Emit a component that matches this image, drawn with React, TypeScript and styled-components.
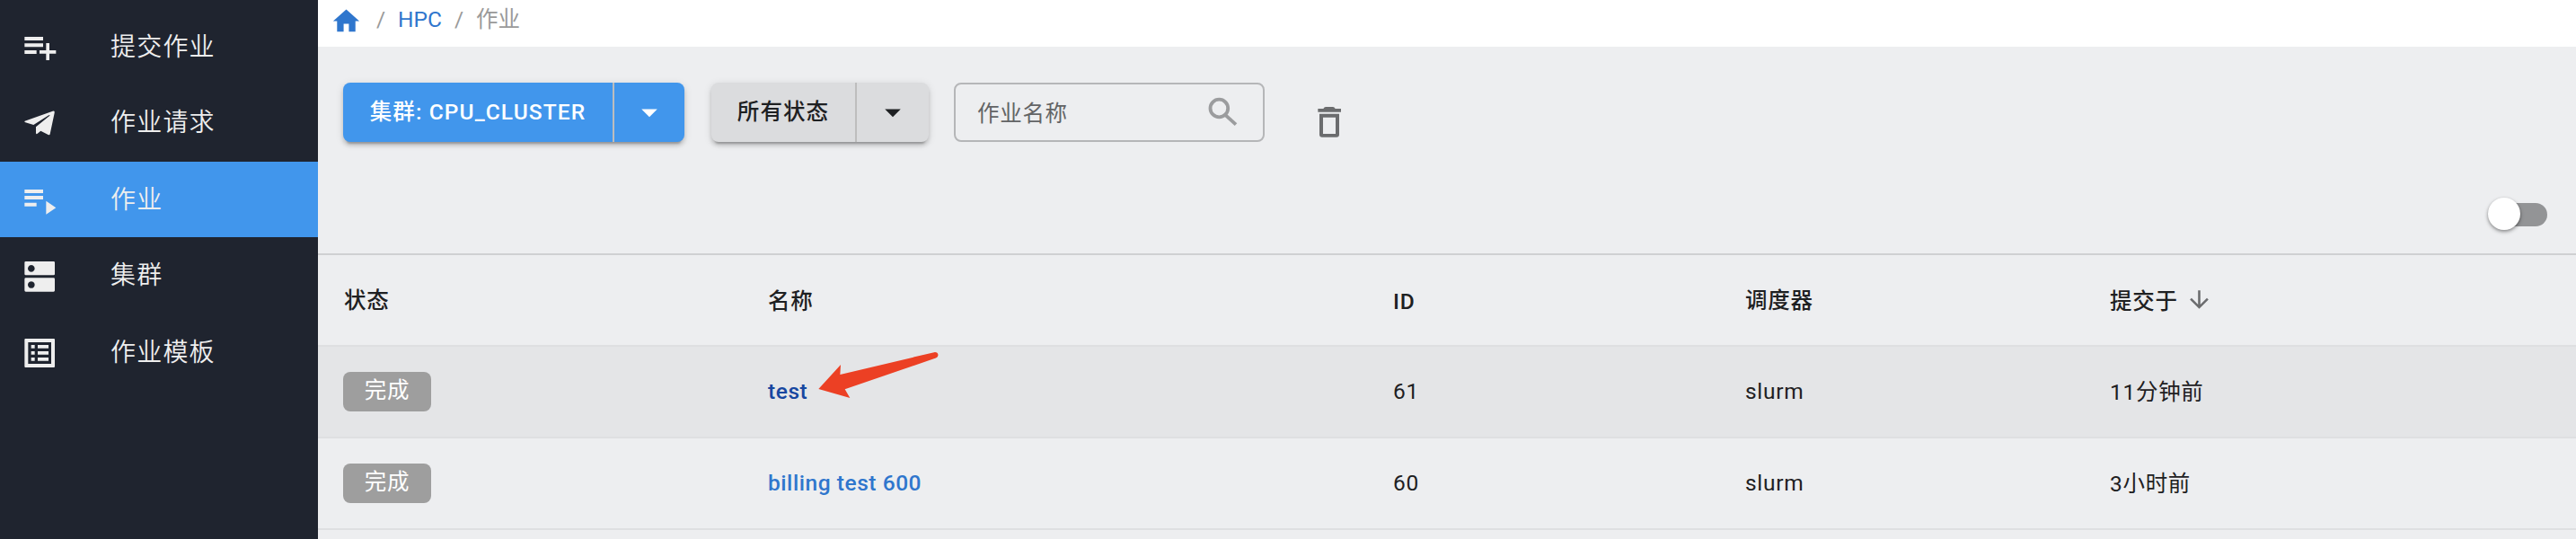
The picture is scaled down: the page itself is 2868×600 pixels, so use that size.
import React from "react";
import styled, { createGlobalStyle } from "styled-components";

const Global = createGlobalStyle`
  * { box-sizing: border-box; }
  html, body { margin: 0; padding: 0; }
  body {
    font-family: Roboto, "Noto Sans CJK SC", sans-serif;
    font-size: 24.5px;
    color: #1e2022;
    background: #edeef0;
    overflow: hidden;
  }
`;

const Page = styled.div`
  position: relative;
  display: flex;
  width: 2868px;
  height: 600px;
`;

const Sidebar = styled.nav`
  width: 354px;
  flex: none;
  padding-top: 10px;
  background: #1f242f;
  color: #eeeeee;
`;

const NavItem = styled.a<{ $active?: boolean; $gap?: number }>`
  display: flex;
  align-items: center;
  height: 84px;
  margin-bottom: ${(p) => p.$gap ?? 0}px;
  padding-left: 23px;
  background: ${(p) => (p.$active ? "#4196ec" : "transparent")};
`;

const NavLabel = styled.span`
  margin: 2px 0 0 58px;
  font-size: 28px;
  font-weight: 350;
  letter-spacing: 1.2px;
  line-height: 40px;
`;

const Icon = styled.svg<{ $size?: number; $color?: string; $left?: number }>`
  display: block;
  flex: none;
  width: ${(p) => p.$size ?? 42}px;
  height: ${(p) => p.$size ?? 42}px;
  margin-left: ${(p) => p.$left ?? 0}px;
  color: ${(p) => p.$color ?? "inherit"};
  fill: currentColor;
`;

const Main = styled.main`
  flex: 1;
  min-width: 0;
`;

const Breadcrumbs = styled.div`
  display: flex;
  align-items: flex-start;
  height: 52px;
  padding: 6px 0 0 14px;
  background: #fff;
  color: #9a9a9a;
  line-height: 34px;
`;

const Crumb = styled.span<{ $link?: boolean; $left: number }>`
  margin-left: ${(p) => p.$left}px;
  margin-top: -1px;
  color: ${(p) => (p.$link ? "#2f76cd" : "inherit")};
`;

const Toolbar = styled.div`
  display: flex;
  height: 106px;
  padding: 40px 0 0 28px;
`;

const ButtonGroup = styled.div<{ $primary?: boolean }>`
  display: flex;
  height: 66px;
  margin-right: 30px;
  border-radius: 8px;
  background: ${(p) => (p.$primary ? "#4196ec" : "#dbdcde")};
  color: ${(p) => (p.$primary ? "#fff" : "#1e2022")};
  box-shadow: 0 6px 2px -4px rgba(0, 0, 0, 0.2), 0 4px 4px 0 rgba(0, 0, 0, 0.14),
    0 2px 10px 0 rgba(0, 0, 0, 0.12);
`;

const ButtonText = styled.button<{ $width: number }>`
  width: ${(p) => p.$width}px;
  padding: 0 0 6px 0;
  border: 0;
  border-right: 2px solid #bdbdbd;
  background: none;
  color: inherit;
  font: inherit;
  font-weight: 500;
  letter-spacing: 1.1px;
  white-space: nowrap;
`;

const ButtonArrow = styled.button<{ $width: number }>`
  display: flex;
  align-items: center;
  justify-content: center;
  width: ${(p) => p.$width}px;
  padding: 0;
  border: 0;
  background: none;
  color: inherit;
`;

const SearchBox = styled.label`
  display: flex;
  align-items: center;
  justify-content: space-between;
  width: 346px;
  height: 66px;
  margin-left: -2px;
  padding: 0 24px;
  border: 2px solid #b5b6b8;
  border-radius: 8px;
  color: #636466;
  letter-spacing: 0.7px;
`;

const Placeholder = styled.span`
  margin-bottom: 2px;
`;

const IconButton = styled.button`
  width: 42px;
  height: 42px;
  margin: 23px 0 0 51px;
  padding: 0;
  border: 0;
  background: none;
`;

const Options = styled.div`
  display: flex;
  justify-content: flex-end;
  height: 124px;
  padding: 68px 32px 0 0;
`;

const SwitchTrack = styled.div`
  width: 64px;
  height: 26px;
  border-radius: 13px;
  background: #939496;
`;

const SwitchThumb = styled.div`
  width: 36px;
  height: 36px;
  margin: -6px 0 0 -2px;
  border-radius: 50%;
  background: #fff;
  box-shadow: 0 2px 4px rgba(0, 0, 0, 0.35), 0 1px 3px rgba(0, 0, 0, 0.15);
`;

const Row = styled.div<{ $hover?: boolean; $head?: boolean }>`
  display: grid;
  grid-template-columns: 473px 696px 392px 406px 1fr;
  align-items: center;
  height: ${(p) => (p.$head ? 104 : 102)}px;
  padding-left: 28px;
  border-top: ${(p) => (p.$head ? "2px solid #cfd0d2" : "0")};
  border-bottom: 2px solid #dedfe1;
  background: ${(p) => (p.$hover ? "#e4e5e7" : "transparent")};
  font-weight: ${(p) => (p.$head ? 500 : 400)};
  letter-spacing: 0.7px;
`;

const Cell = styled.div<{ $shift?: number; $indent?: number }>`
  display: flex;
  align-items: center;
  margin-bottom: ${(p) => p.$shift ?? 0}px;
  padding-left: ${(p) => p.$indent ?? 0}px;
`;

const Chip = styled.span`
  width: 98px;
  height: 44px;
  border-radius: 8px;
  background: #9e9e9e;
  color: #fff;
  line-height: 42px;
  text-align: center;
`;

const JobLink = styled.a<{ $hover?: boolean }>`
  color: ${(p) => (p.$hover ? "#1747a0" : "#2f76cd")};
  font-weight: 500;
  letter-spacing: 0.55px;
`;

const Pointer = styled.svg`
  position: absolute;
  left: 908px;
  top: 388px;
  width: 140px;
  height: 58px;
  fill: #ec4024;
`;

const icons = {
  home: "M10 20v-6h4v6h5v-8h3L12 3 2 12h3v8z",
  dropDown: "M7 10l5 5 5-5z",
  arrowDown: "M20 12l-1.41-1.41L13 16.17V4h-2v12.17l-5.58-5.59L4 12l8 8 8-8z",
};

const GlyphIcon = ({ name, ...rest }: { name: keyof typeof icons; $size?: number; $color?: string; $left?: number }) => (
  <Icon viewBox="0 0 24 24" {...rest}>
    <path d={icons[name]} />
  </Icon>
);

const PlaylistAddIcon = () => (
  <Icon viewBox="0 0 126 126">
    <path d="M13 30H75V42H13zM13 52H75V64H13zM13 75H53V87H13zM85 51H96V75H118V86H96V108H85V86H63V75H85z" />
  </Icon>
);

const PlaylistPlayIcon = () => (
  <Icon viewBox="0 0 126 126">
    <path d="M13 30H75V42H13zM13 51H75V63H13zM13 74H53V86H13zM85 68 118 90.5 85 113z" />
  </Icon>
);

const SendIcon = () => (
  <Icon viewBox="0 0 126 126">
    <path d="M14 59 107 26Q115 24 113 32L98 103Q97 107 92 105L67 92 56 101Q51 105 51 98V79L97 41Q98 38 94 40L43 72 16 64Q10 61 14 59Z" />
  </Icon>
);

const ServerIcon = () => (
  <Icon viewBox="0 0 126 126">
    <path
      fillRule="evenodd"
      d="M17 18h93q4 0 4 4v38q0 4-4 4H17q-4 0-4-4V22q0-4 4-4zM35.5 30a11.5 11.5 0 1 0 .01 0zM17 73h93q4 0 4 4v38q0 4-4 4H17q-4 0-4-4V77q0-4 4-4zM35.5 84.5a11.5 11.5 0 1 0 .01 0z"
    />
  </Icon>
);

const ListIcon = () => (
  <Icon viewBox="0 0 126 126">
    <path
      fillRule="evenodd"
      d="M16 18h95q3 0 3 3v90q0 3-3 3H16q-3 0-3-3V21q0-3 3-3zM25 30v72h77V30zM35 39h12v11H35zM57 39h36v11H57zM35 60h12v11H35zM57 60h36v11H57zM35 81h12v11H35zM57 81h36v11H57z"
    />
  </Icon>
);

const SearchIcon = () => (
  <Icon viewBox="0 0 126 126" $color="#9b9c9e">
    <circle cx="52" cy="49.5" r="29.5" fill="none" stroke="currentColor" strokeWidth="11.5" />
    <path d="M74 73 108 104" stroke="currentColor" strokeWidth="11.5" />
  </Icon>
);

const TrashIcon = () => (
  <Icon viewBox="0 0 126 126" $color="#6b6c6e">
    <path
      fillRule="evenodd"
      d="M25 18H43Q46 12 51 12H75Q80 12 83 18H102V29H25zM30 35H96V104Q96 113 87 113H39Q30 113 30 104zM42 47V102H84V47z"
    />
  </Icon>
);

const nav = [
  { label: "提交作业", icon: <PlaylistAddIcon />, gap: 0 },
  { label: "作业请求", icon: <SendIcon />, gap: 2 },
  { label: "作业", icon: <PlaylistPlayIcon />, gap: 0, active: true },
  { label: "集群", icon: <ServerIcon />, gap: 2 },
  { label: "作业模板", icon: <ListIcon />, gap: 0 },
];

const jobs = [
  { name: "test", id: "61", time: "11分钟前", hover: true },
  { name: "billing test 600", id: "60", time: "3小时前", hover: false },
];

export default function App() {
  return (
    <Page>
      <Global />
      <Sidebar>
        {nav.map((n) => (
          <NavItem key={n.label} $active={n.active} $gap={n.gap}>
            {n.icon}
            <NavLabel>{n.label}</NavLabel>
          </NavItem>
        ))}
      </Sidebar>
      <Main>
        <Breadcrumbs>
          <GlyphIcon name="home" $size={35} $color="#2f76cd" />
          <Crumb $left={16}>/</Crumb>
          <Crumb $left={14} $link>HPC</Crumb>
          <Crumb $left={14}>/</Crumb>
          <Crumb $left={14}>作业</Crumb>
        </Breadcrumbs>
        <Toolbar>
          <ButtonGroup $primary>
            <ButtonText $width={302}>集群: CPU_CLUSTER</ButtonText>
            <ButtonArrow $width={78}>
              <GlyphIcon name="dropDown" />
            </ButtonArrow>
          </ButtonGroup>
          <ButtonGroup>
            <ButtonText $width={162}>所有状态</ButtonText>
            <ButtonArrow $width={80}>
              <GlyphIcon name="dropDown" />
            </ButtonArrow>
          </ButtonGroup>
          <SearchBox>
            <Placeholder>作业名称</Placeholder>
            <SearchIcon />
          </SearchBox>
          <IconButton>
            <TrashIcon />
          </IconButton>
        </Toolbar>
        <Options>
          <SwitchTrack>
            <SwitchThumb />
          </SwitchTrack>
        </Options>
        <Row $head>
          <Cell $shift={4} $indent={1}>状态</Cell>
          <Cell $shift={2}>名称</Cell>
          <Cell $shift={-2}>ID</Cell>
          <Cell $shift={4}>调度器</Cell>
          <Cell $shift={1}>
            提交于
            <GlyphIcon name="arrowDown" $size={31} $color="#6b6c6e" $left={8} />
          </Cell>
        </Row>
        {jobs.map((j) => (
          <Row key={j.id} $hover={j.hover}>
            <Cell><Chip>完成</Chip></Cell>
            <Cell $shift={2}><JobLink $hover={j.hover}>{j.name}</JobLink></Cell>
            <Cell $shift={2}>{j.id}</Cell>
            <Cell $shift={2}>slurm</Cell>
            <Cell $shift={3}>{j.time}</Cell>
          </Row>
        ))}
      </Main>
      <Pointer viewBox="204 264 420 174">
        <path d="M214 399 288 318 286 351 600 276.5Q612 275 613.5 286 613 293 606 295.5L302 400 319 429Z" />
      </Pointer>
    </Page>
  );
}
